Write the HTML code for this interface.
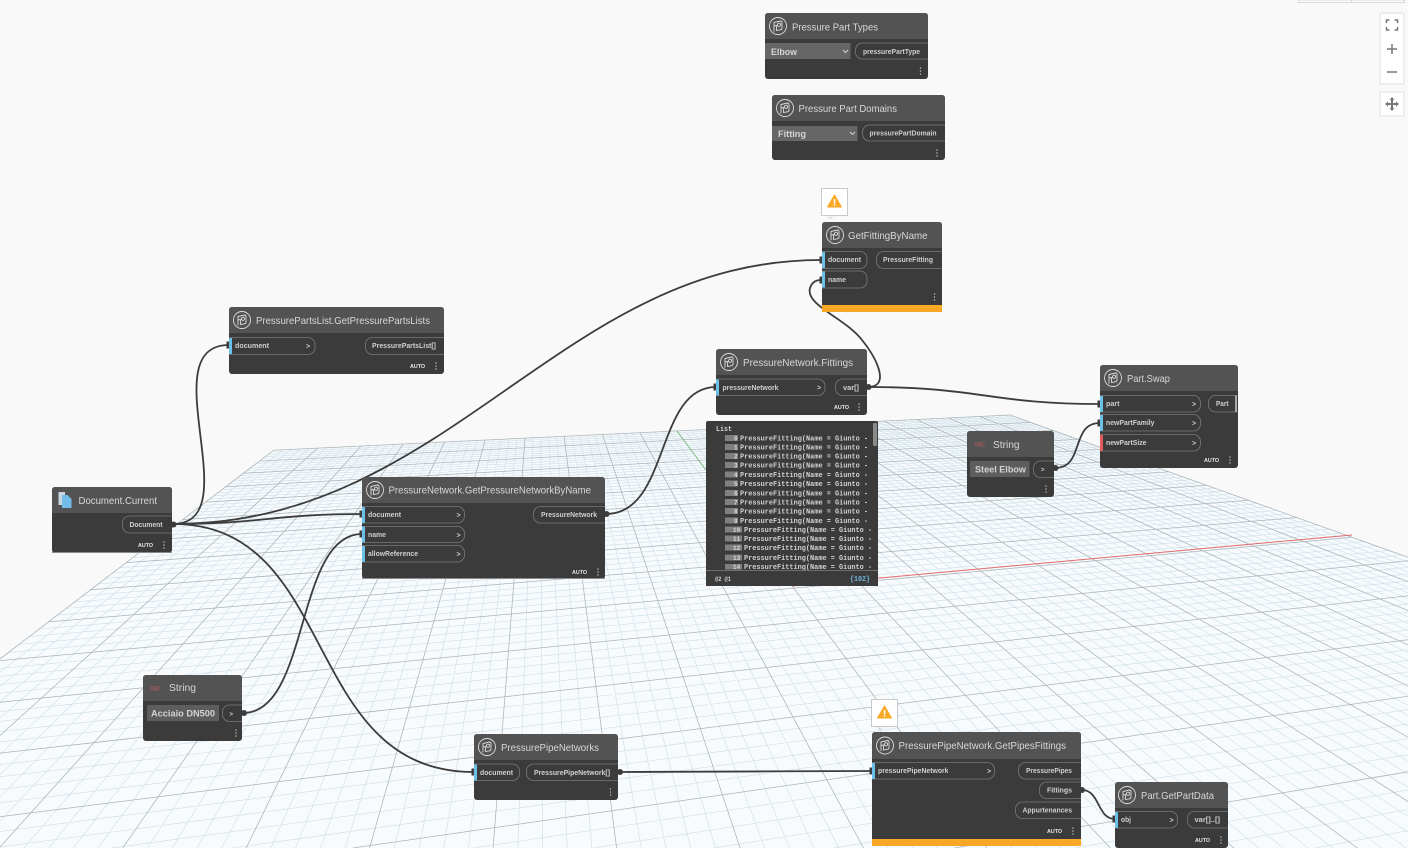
<!DOCTYPE html>
<html><head><meta charset="utf-8"><title>Dynamo graph</title>
<style>
html,body{margin:0;padding:0;background:#f9f9f9;width:1408px;height:848px;overflow:hidden}
#root{display:block;filter:blur(.3px);overflow:hidden}
text{font-family:"Liberation Sans",sans-serif}
.t{font-size:10.5px;fill:#d8d8d8}
.l{font-size:7px;font-weight:bold;fill:#cfcfcf}
.a{font-size:5.5px;font-weight:bold;fill:#e8e8e8}
.v{font-size:9.5px;font-weight:bold;fill:#d4d4d4}
.p{fill:none;stroke:#7a7a7a;stroke-width:.8}
.b{fill:#3b3b3b}
.h{fill:#535353}
.w{fill:none;stroke:#3c3c3c;stroke-width:1.8}
.k{fill:#3c3c3c}
.m{font-family:"Liberation Mono",monospace;font-size:7px;font-weight:bold;fill:#d2d2d2}
.i{fill:#808080}
.ix{font-family:"Liberation Mono",monospace;font-size:6px;font-weight:bold;fill:#d8d8d8}
.c{fill:none;stroke:#dcdcdc;stroke-width:.9}
</style></head><body>
<svg id="root" width="1408" height="848" viewBox="0 0 1408 848" xmlns="http://www.w3.org/2000/svg">
<defs>
<g id="d"><circle cx="0" cy="-3" r=".75" fill="#bdbdbd"/><circle cx="0" cy="0" r=".75" fill="#bdbdbd"/><circle cx="0" cy="3" r=".75" fill="#bdbdbd"/></g>
<g id="ic"><circle r="8.5" class="c"/><path class="c" d="M-4 -3.5 L2.5 -5 Q4 -5 4 -3.5 V2 Q4 3.5 2.5 3.8 L-1.5 4.5 V-0.5 L-4 0 Z M-4 -3.5 V5.5"/><circle cx="1" cy="-1.2" r="1.6" class="c"/></g>
<g id="wn"><rect x="0" y="0" width="26" height="27" fill="#fff" stroke="#c9c9c9"/><path d="M7 28 L9 30 L11 28" fill="none" stroke="#c9c9c9" stroke-width=".8"/><path d="M13 6.500 L20 18.500 H6 Z" fill="#f9a825" stroke="#f9a825" stroke-linejoin="round"/><rect x="12.300" y="10.500" width="1.500" height="4.500" fill="#fff"/><rect x="12.300" y="15.800" width="1.500" height="1.500" fill="#fff"/></g>
</defs>
<rect width="1408" height="848" fill="#f9f9f9"/>
<polygon points="274,450 1010,415 1408,557 1408,848 0,848 0,658" fill="#f8fbfd"/>
<g id="grid"></g>

<!-- top right stub + controls -->
<rect x="1299" y="0" width="105.500" height="2.500" fill="#fff" stroke="#d6d6d6"/><line x1="1351.500" y1="0" x2="1351.500" y2="2" stroke="#d6d6d6"/>
<rect x="1380" y="13" width="24" height="71" rx="1" fill="#fff" stroke="#dedede"/>
<rect x="1380" y="92" width="24" height="24" rx="1" fill="#fff" stroke="#e2e2e2"/>
<path d="M1386.500 23 V20 H1389.500 M1394.500 20 H1397.500 V23 M1397.500 27 V30 H1394.500 M1389.500 30 H1386.500 V27" fill="none" stroke="#777" stroke-width="1.500"/>
<path d="M1387 49 H1397 M1392 44 V54" stroke="#777" stroke-width="1.500"/>
<path d="M1387 72 H1397" stroke="#777" stroke-width="1.500"/>
<path d="M1392 98 V110 M1386 104 H1398" stroke="#777" stroke-width="2"/>
<path d="M1392 97 L1394.500 100 H1389.500 Z M1392 111 L1394.500 108 H1389.500 Z M1385 104 L1388 101.500 V106.500 Z M1399 104 L1396 101.500 V106.500 Z" fill="#777"/>

<!-- wires -->
<path class="w" d="M173 524 C250 524 150 345 229 345"/>
<path class="w" d="M173 524 C450 524 560 260 821 260"/>
<path class="w" d="M173 524 C260 524 275 514 362 514"/>
<path class="w" d="M173 524 C340 524 300 772 474 772"/>
<path class="w" d="M243 713 C310 713 295 534 362 534"/>
<path class="w" d="M606 514 C670 514 655 387 716 387"/>
<path class="w" d="M868 387 C980 387 990 404 1100 404"/>
<path class="w" d="M868 387 C890 387 878 360 862 340 C845 318 805 305 810 288 C812 282 816 280 821 280"/>
<path class="w" d="M1055 468 C1085 468 1070 423 1100 423"/>
<path class="w" d="M620 772 C700 772 790 771 872 771"/>
<path class="w" d="M1082 790 C1100 790 1097 819 1115 819"/>
<g class="k">
<circle cx="173.500" cy="524.500" r="3"/><circle cx="606.500" cy="514" r="3"/><circle cx="868.500" cy="387" r="3"/><circle cx="1055.500" cy="468" r="3"/><circle cx="244" cy="713" r="3"/><circle cx="620" cy="772" r="3"/><circle cx="1082" cy="790" r="3"/>
<rect x="226.500" y="341.500" width="3" height="7"/><rect x="359.500" y="510.500" width="3" height="7"/><rect x="359.500" y="530.500" width="3" height="7"/><rect x="713.500" y="383.500" width="3" height="7"/><rect x="819.500" y="256.500" width="3" height="7"/><rect x="819.500" y="276.500" width="3" height="7"/><rect x="1097.500" y="400.500" width="3" height="7"/><rect x="1097.500" y="419.500" width="3" height="7"/><rect x="471.500" y="768.500" width="3" height="7"/><rect x="869.500" y="767.500" width="3" height="7"/><rect x="1112.500" y="815.500" width="3" height="7"/>
</g>

<!-- Pressure Part Types -->
<svg x="765" y="13" width="163" height="66" viewBox="765 13 163 66">
<rect x="765" y="13" width="163" height="66" rx="3" class="b"/><rect x="765" y="13" width="163" height="26" rx="3" class="h"/><rect x="765" y="30" width="163" height="9" class="h"/>
<rect x="765" y="43" width="85.500" height="16" fill="#666"/>
<text class="v" x="771" y="55" textLength="26" lengthAdjust="spacingAndGlyphs">Elbow</text>
<path d="M843 50 L845.500 52.500 L848 50" fill="none" stroke="#d0d0d0"/>
<rect class="p" x="855.500" y="43" width="90" height="16" rx="7"/>
<text class="l" x="863" y="54" textLength="57" lengthAdjust="spacingAndGlyphs">pressurePartType</text>
<text class="t" x="792" y="30.500" textLength="86" lengthAdjust="spacingAndGlyphs">Pressure Part Types</text>
<use href="#ic" x="778" y="26"/><use href="#d" x="920.500" y="71"/>
</svg>

<!-- Pressure Part Domains -->
<svg x="772" y="95" width="173" height="65" viewBox="772 95 173 65">
<rect x="772" y="95" width="173" height="65" rx="3" class="b"/><rect x="772" y="95" width="173" height="26" rx="3" class="h"/><rect x="772" y="112" width="173" height="9" class="h"/>
<rect x="772" y="126" width="85.500" height="15" fill="#666"/>
<text class="v" x="778" y="137" textLength="28" lengthAdjust="spacingAndGlyphs">Fitting</text>
<path d="M850 132 L852.500 134.500 L855 132" fill="none" stroke="#d0d0d0"/>
<rect class="p" x="862.500" y="125" width="100" height="16" rx="7"/>
<text class="l" x="869.500" y="135.500" textLength="67" lengthAdjust="spacingAndGlyphs">pressurePartDomain</text>
<text class="t" x="798.500" y="112" textLength="98.500" lengthAdjust="spacingAndGlyphs">Pressure Part Domains</text>
<use href="#ic" x="785" y="108"/><use href="#d" x="937" y="153"/>
</svg>

<!-- warning boxes -->
<use href="#wn" x="821.500" y="188.500"/>
<use href="#wn" x="871.500" y="699.500"/>

<!-- GetFittingByName -->
<svg x="822" y="222" width="120" height="90" viewBox="822 222 120 90">
<rect x="822" y="222" width="120" height="90" rx="3" class="b"/><rect x="822" y="222" width="120" height="26" rx="3" class="h"/><rect x="822" y="239" width="120" height="9" class="h"/>
<rect x="822" y="305" width="120" height="7" fill="#f9a825"/>
<rect class="p" x="812" y="251.500" width="55" height="17" rx="7"/><rect class="p" x="812" y="271" width="55" height="17" rx="7"/>
<rect class="p" x="876.500" y="251.500" width="85" height="17" rx="7"/>
<rect x="822" y="252" width="3" height="16" fill="#6ac0e7"/><rect x="822" y="271.500" width="3" height="16" fill="#6ac0e7"/>
<text class="l" x="828" y="262" textLength="33" lengthAdjust="spacingAndGlyphs">document</text>
<text class="l" x="828" y="282" textLength="18" lengthAdjust="spacingAndGlyphs">name</text>
<text class="l" x="883" y="262" textLength="50" lengthAdjust="spacingAndGlyphs">PressureFitting</text>
<text class="t" x="848" y="239" textLength="79.500" lengthAdjust="spacingAndGlyphs">GetFittingByName</text>
<use href="#ic" x="835" y="235"/><use href="#d" x="934.500" y="297"/>
</svg>

<!-- PressurePartsList -->
<svg x="229" y="307" width="215" height="67" viewBox="229 307 215 67">
<rect x="229" y="307" width="215" height="67" rx="3" class="b"/><rect x="229" y="307" width="215" height="26" rx="3" class="h"/><rect x="229" y="324" width="215" height="9" class="h"/>
<rect class="p" x="219" y="337.500" width="96" height="17" rx="7"/><rect class="p" x="365.500" y="337.500" width="100" height="17" rx="7"/>
<rect x="229" y="338" width="3" height="16" fill="#6ac0e7"/>
<text class="l" x="235" y="348" textLength="34" lengthAdjust="spacingAndGlyphs">document</text>
<text class="l" x="306" y="348.500">&gt;</text>
<text class="l" x="372" y="348" textLength="64" lengthAdjust="spacingAndGlyphs">PressurePartsList[]</text>
<text class="t" x="256" y="324" textLength="174" lengthAdjust="spacingAndGlyphs">PressurePartsList.GetPressurePartsLists</text>
<use href="#ic" x="242" y="320"/>
<text class="a" x="410" y="368" textLength="15" lengthAdjust="spacingAndGlyphs">AUTO</text><use href="#d" x="436" y="366"/>
</svg>

<!-- PressureNetwork.Fittings -->
<svg x="716" y="349" width="151" height="66" viewBox="716 349 151 66">
<rect x="716" y="349" width="151" height="66" rx="3" class="b"/><rect x="716" y="349" width="151" height="26" rx="3" class="h"/><rect x="716" y="366" width="151" height="9" class="h"/>
<rect class="p" x="706" y="379" width="119" height="16.500" rx="7"/><rect class="p" x="835.500" y="379" width="50" height="16.500" rx="7"/>
<rect x="716" y="379.500" width="3" height="16" fill="#6ac0e7"/>
<text class="l" x="722.500" y="390" textLength="56" lengthAdjust="spacingAndGlyphs">pressureNetwork</text>
<text class="l" x="817" y="390">&gt;</text>
<text class="l" x="843" y="390" textLength="16" lengthAdjust="spacingAndGlyphs">var[]</text>
<text class="t" x="743" y="366" textLength="110" lengthAdjust="spacingAndGlyphs">PressureNetwork.Fittings</text>
<use href="#ic" x="729" y="362"/>
<text class="a" x="834" y="409" textLength="15" lengthAdjust="spacingAndGlyphs">AUTO</text><use href="#d" x="859" y="407"/>
</svg>

<!-- Watch -->
<rect x="706" y="421" width="172" height="165" rx="2" class="b"/>
<rect x="873" y="423" width="4" height="23" rx="1.500" fill="#8a8a8a"/>
<text class="m" x="716" y="431" textLength="16" lengthAdjust="spacingAndGlyphs">List</text>
<g>
<rect class="i" x="725" y="435" width="13" height="6"/><text class="ix" x="734" y="440.500">0</text><text class="m" x="740" y="440.500" textLength="128" lengthAdjust="spacingAndGlyphs">PressureFitting(Name = Giunto -</text>
<rect class="i" x="725" y="444" width="13" height="6"/><text class="ix" x="734" y="449.500">1</text><text class="m" x="740" y="449.500" textLength="128" lengthAdjust="spacingAndGlyphs">PressureFitting(Name = Giunto -</text>
<rect class="i" x="725" y="453" width="13" height="6"/><text class="ix" x="734" y="458.500">2</text><text class="m" x="740" y="458.500" textLength="128" lengthAdjust="spacingAndGlyphs">PressureFitting(Name = Giunto -</text>
<rect class="i" x="725" y="462" width="13" height="6"/><text class="ix" x="734" y="467.500">3</text><text class="m" x="740" y="467.500" textLength="128" lengthAdjust="spacingAndGlyphs">PressureFitting(Name = Giunto -</text>
<rect class="i" x="725" y="471.500" width="13" height="6"/><text class="ix" x="734" y="477">4</text><text class="m" x="740" y="477" textLength="128" lengthAdjust="spacingAndGlyphs">PressureFitting(Name = Giunto -</text>
<rect class="i" x="725" y="480.500" width="13" height="6"/><text class="ix" x="734" y="486">5</text><text class="m" x="740" y="486" textLength="128" lengthAdjust="spacingAndGlyphs">PressureFitting(Name = Giunto -</text>
<rect class="i" x="725" y="490" width="13" height="6"/><text class="ix" x="734" y="495.500">6</text><text class="m" x="740" y="495.500" textLength="128" lengthAdjust="spacingAndGlyphs">PressureFitting(Name = Giunto -</text>
<rect class="i" x="725" y="499" width="13" height="6"/><text class="ix" x="734" y="504.500">7</text><text class="m" x="740" y="504.500" textLength="128" lengthAdjust="spacingAndGlyphs">PressureFitting(Name = Giunto -</text>
<rect class="i" x="725" y="508" width="13" height="6"/><text class="ix" x="734" y="513.500">8</text><text class="m" x="740" y="513.500" textLength="128" lengthAdjust="spacingAndGlyphs">PressureFitting(Name = Giunto -</text>
<rect class="i" x="725" y="517.500" width="13" height="6"/><text class="ix" x="734" y="523">9</text><text class="m" x="740" y="523" textLength="128" lengthAdjust="spacingAndGlyphs">PressureFitting(Name = Giunto -</text>
<rect class="i" x="725" y="526.500" width="17" height="6"/><text class="ix" x="733" y="532">10</text><text class="m" x="744" y="532" textLength="128" lengthAdjust="spacingAndGlyphs">PressureFitting(Name = Giunto -</text>
<rect class="i" x="725" y="535.500" width="17" height="6"/><text class="ix" x="733" y="541">11</text><text class="m" x="744" y="541" textLength="128" lengthAdjust="spacingAndGlyphs">PressureFitting(Name = Giunto -</text>
<rect class="i" x="725" y="544.500" width="17" height="6"/><text class="ix" x="733" y="550">12</text><text class="m" x="744" y="550" textLength="128" lengthAdjust="spacingAndGlyphs">PressureFitting(Name = Giunto -</text>
<rect class="i" x="725" y="554.500" width="17" height="6"/><text class="ix" x="733" y="560">13</text><text class="m" x="744" y="560" textLength="128" lengthAdjust="spacingAndGlyphs">PressureFitting(Name = Giunto -</text>
<rect class="i" x="725" y="564" width="17" height="5.500" /><text class="ix" x="733" y="569">14</text><text class="m" x="744" y="569" textLength="128" lengthAdjust="spacingAndGlyphs">PressureFitting(Name = Giunto -</text>
</g>
<rect x="706" y="570" width="172" height="16" class="b"/><line x1="706" y1="570.500" x2="878" y2="570.500" stroke="#6d6d6d"/>
<text class="m" x="715" y="581" textLength="16" lengthAdjust="spacingAndGlyphs" style="font-size:6px">@2 @1</text>
<text class="m" x="850" y="581" textLength="20" lengthAdjust="spacingAndGlyphs" style="fill:#6fb5d8">{102}</text>

<!-- Document.Current -->
<svg x="52" y="487" width="120" height="66" viewBox="52 487 120 66">
<rect x="52" y="487" width="120" height="66" rx="3" class="b"/><rect x="52" y="487" width="120" height="26" rx="3" class="h"/><rect x="52" y="504" width="120" height="9" class="h"/>
<path d="M58.500 492 H65 V505 H58.500 Z" fill="#c9d6de"/><path d="M62 495 H67.500 L71.500 499 V508 H62 Z" fill="#72bde9"/>
<rect class="p" x="122.500" y="516" width="70" height="17" rx="7"/>
<text class="l" x="129.500" y="527" textLength="33" lengthAdjust="spacingAndGlyphs">Document</text>
<text class="t" x="78.500" y="504" textLength="78.500" lengthAdjust="spacingAndGlyphs">Document.Current</text>
<text class="a" x="138" y="547" textLength="15" lengthAdjust="spacingAndGlyphs">AUTO</text><use href="#d" x="164" y="545"/>
<rect x="52" y="552" width="120" height="1" fill="#8a8a8a"/>
</svg>

<!-- GetPressureNetworkByName -->
<svg x="362" y="477" width="243" height="102" viewBox="362 477 243 102">
<rect x="362" y="477" width="243" height="102" rx="3" class="b"/><rect x="362" y="477" width="243" height="26" rx="3" class="h"/><rect x="362" y="494" width="243" height="9" class="h"/>
<rect class="p" x="352" y="506.500" width="112.500" height="16.500" rx="7"/><rect class="p" x="352" y="526.500" width="112.500" height="16" rx="7"/><rect class="p" x="352" y="545.500" width="112.500" height="16.500" rx="7"/>
<rect class="p" x="533.500" y="506.500" width="90" height="16.500" rx="7"/>
<rect x="362" y="507" width="3" height="16" fill="#6ac0e7"/><rect x="362" y="526.500" width="3" height="16" fill="#6ac0e7"/><rect x="362" y="546" width="3" height="16" fill="#6ac0e7"/>
<text class="l" x="368" y="517" textLength="33" lengthAdjust="spacingAndGlyphs">document</text><text class="l" x="456.500" y="517.500">&gt;</text>
<text class="l" x="368" y="537" textLength="18" lengthAdjust="spacingAndGlyphs">name</text><text class="l" x="456.500" y="537.500">&gt;</text>
<text class="l" x="368" y="556" textLength="50" lengthAdjust="spacingAndGlyphs">allowReference</text><text class="l" x="456.500" y="556.500">&gt;</text>
<text class="l" x="541" y="517" textLength="56" lengthAdjust="spacingAndGlyphs">PressureNetwork</text>
<text class="t" x="388.500" y="493.500" textLength="202.500" lengthAdjust="spacingAndGlyphs">PressureNetwork.GetPressureNetworkByName</text>
<use href="#ic" x="375" y="490"/>
<text class="a" x="572" y="574" textLength="15" lengthAdjust="spacingAndGlyphs">AUTO</text><use href="#d" x="598" y="572"/>
<rect x="362" y="578" width="243" height="1" fill="#8a8a8a"/>
</svg>

<!-- String Acciaio -->
<svg x="143" y="675" width="99" height="66" viewBox="143 675 99 66">
<rect x="143" y="675" width="99" height="66" rx="3" class="b"/><rect x="143" y="675" width="99" height="26" rx="3" class="h"/><rect x="143" y="692" width="99" height="9" class="h"/>
<rect x="147" y="705" width="72" height="16" fill="#5d5d5d"/>
<text class="v" x="151" y="716.500" textLength="64" lengthAdjust="spacingAndGlyphs">Acciaio DN500</text>
<rect class="p" x="222.500" y="705" width="40" height="16.500" rx="7"/>
<text class="l" x="229.500" y="716" style="font-size:6px">&gt;</text>
<text x="150" y="690.500" textLength="11" lengthAdjust="spacingAndGlyphs" style="font-size:6px;fill:#a35a5a;font-weight:bold">ABC</text>
<text class="t" x="169" y="691" textLength="27" lengthAdjust="spacingAndGlyphs">String</text>
<use href="#d" x="236" y="733"/>
</svg>

<!-- String Steel Elbow -->
<svg x="967" y="431" width="87" height="66" viewBox="967 431 87 66">
<rect x="967" y="431" width="87" height="66" rx="3" class="b"/><rect x="967" y="431" width="87" height="26" rx="3" class="h"/><rect x="967" y="448" width="87" height="9" class="h"/>
<rect x="970" y="461" width="59.500" height="16" fill="#5d5d5d"/>
<text class="v" x="975" y="472.500" textLength="51" lengthAdjust="spacingAndGlyphs">Steel Elbow</text>
<rect class="p" x="1033.500" y="461" width="40" height="16.500" rx="7"/>
<text class="l" x="1041" y="471.500" style="font-size:6px">&gt;</text>
<text x="974" y="446.500" textLength="11" lengthAdjust="spacingAndGlyphs" style="font-size:6px;fill:#a35a5a;font-weight:bold">ABC</text>
<text class="t" x="993" y="448" textLength="26.500" lengthAdjust="spacingAndGlyphs">String</text>
<use href="#d" x="1046" y="489"/>
</svg>

<!-- Part.Swap -->
<svg x="1100" y="365" width="138" height="103" viewBox="1100 365 138 103">
<rect x="1100" y="365" width="138" height="103" rx="3" class="b"/><rect x="1100" y="365" width="138" height="26" rx="3" class="h"/><rect x="1100" y="382" width="138" height="9" class="h"/>
<rect class="p" x="1090" y="395.500" width="110.500" height="16.500" rx="7"/><rect class="p" x="1090" y="414.500" width="110.500" height="16.500" rx="7"/><rect class="p" x="1090" y="434.500" width="110.500" height="16.500" rx="7"/>
<rect class="p" x="1208.500" y="395.500" width="50" height="16.500" rx="7"/>
<rect x="1235" y="395.500" width="2" height="16.500" fill="#aaa"/>
<rect x="1100" y="396" width="3" height="16" fill="#6ac0e7"/><rect x="1100" y="415" width="3" height="16" fill="#6ac0e7"/><rect x="1100" y="435" width="3" height="16" fill="#e25a5a"/>
<text class="l" x="1106" y="406" textLength="13.500" lengthAdjust="spacingAndGlyphs">part</text><text class="l" x="1192" y="406.500">&gt;</text>
<text class="l" x="1106" y="425" textLength="48.500" lengthAdjust="spacingAndGlyphs">newPartFamily</text><text class="l" x="1192" y="425.500">&gt;</text>
<text class="l" x="1106" y="445" textLength="40.500" lengthAdjust="spacingAndGlyphs">newPartSize</text><text class="l" x="1192" y="445.500">&gt;</text>
<text class="l" x="1216" y="406" textLength="12.500" lengthAdjust="spacingAndGlyphs">Part</text>
<text class="t" x="1127" y="382" textLength="43" lengthAdjust="spacingAndGlyphs">Part.Swap</text>
<use href="#ic" x="1113" y="378"/>
<text class="a" x="1204" y="462" textLength="15" lengthAdjust="spacingAndGlyphs">AUTO</text><use href="#d" x="1230" y="460"/>
</svg>

<!-- PressurePipeNetworks -->
<svg x="474" y="734" width="144" height="66" viewBox="474 734 144 66">
<rect x="474" y="734" width="144" height="66" rx="3" class="b"/><rect x="474" y="734" width="144" height="26" rx="3" class="h"/><rect x="474" y="751" width="144" height="9" class="h"/>
<rect class="p" x="464" y="764" width="55.500" height="16.500" rx="7"/><rect class="p" x="526.500" y="764" width="110" height="16.500" rx="7"/>
<rect x="474" y="764.500" width="3" height="16" fill="#6ac0e7"/>
<text class="l" x="480" y="775" textLength="33" lengthAdjust="spacingAndGlyphs">document</text>
<text class="l" x="534" y="775" textLength="76" lengthAdjust="spacingAndGlyphs">PressurePipeNetwork[]</text>
<text class="t" x="501" y="751" textLength="98" lengthAdjust="spacingAndGlyphs">PressurePipeNetworks</text>
<use href="#ic" x="487" y="747"/><use href="#d" x="610.500" y="792"/>
</svg>

<!-- GetPipesFittings -->
<svg x="872" y="732" width="209" height="114" viewBox="872 732 209 114">
<rect x="872" y="732" width="209" height="114" rx="3" class="b"/><rect x="872" y="732" width="209" height="27" rx="3" class="h"/><rect x="872" y="749" width="209" height="10" class="h"/>
<rect x="872" y="839" width="209" height="7" fill="#f9a825"/>
<rect class="p" x="862" y="762.500" width="132.500" height="16.500" rx="7"/>
<rect class="p" x="1018.500" y="762.500" width="85" height="16.500" rx="7"/><rect class="p" x="1039.500" y="782" width="65" height="16.500" rx="7"/><rect class="p" x="1015.500" y="802" width="85" height="16.500" rx="7"/>
<rect x="872" y="763" width="3" height="16" fill="#6ac0e7"/>
<text class="l" x="878" y="773" textLength="70.500" lengthAdjust="spacingAndGlyphs">pressurePipeNetwork</text><text class="l" x="987" y="773.500">&gt;</text>
<text class="l" x="1026" y="773" textLength="46" lengthAdjust="spacingAndGlyphs">PressurePipes</text>
<text class="l" x="1047" y="792.500" textLength="25" lengthAdjust="spacingAndGlyphs">Fittings</text>
<text class="l" x="1022.500" y="812.500" textLength="49.500" lengthAdjust="spacingAndGlyphs">Appurtenances</text>
<text class="t" x="898.500" y="749" textLength="167.500" lengthAdjust="spacingAndGlyphs">PressurePipeNetwork.GetPipesFittings</text>
<use href="#ic" x="885" y="745.500"/>
<text class="a" x="1047" y="833" textLength="15" lengthAdjust="spacingAndGlyphs">AUTO</text><use href="#d" x="1073" y="831"/>
</svg>

<!-- Part.GetPartData -->
<svg x="1115" y="782" width="113" height="66" viewBox="1115 782 113 66">
<rect x="1115" y="782" width="113" height="66" rx="3" class="b"/><rect x="1115" y="782" width="113" height="26" rx="3" class="h"/><rect x="1115" y="799" width="113" height="9" class="h"/>
<rect class="p" x="1105" y="811.500" width="72.500" height="16.500" rx="7"/><rect class="p" x="1187.500" y="811.500" width="60" height="16.500" rx="7"/>
<rect x="1115" y="812" width="3" height="16" fill="#6ac0e7"/>
<text class="l" x="1121" y="822" textLength="10" lengthAdjust="spacingAndGlyphs">obj</text><text class="l" x="1169.500" y="822.500">&gt;</text>
<text class="l" x="1194.500" y="822" textLength="25.500" lengthAdjust="spacingAndGlyphs">var[]..[]</text>
<text class="t" x="1141" y="799" textLength="73" lengthAdjust="spacingAndGlyphs">Part.GetPartData</text>
<use href="#ic" x="1127" y="795"/>
<text class="a" x="1195" y="842" textLength="15" lengthAdjust="spacingAndGlyphs">AUTO</text><use href="#d" x="1221" y="840"/>
</svg>
</svg>
<script>
(function(){
var g=document.getElementById('grid'),NS='http://www.w3.org/2000/svg',N=100,minor='',major='';
function seg(a,b,c,d){
  /* clip the segment to the 1408x848 frame */
  var dx=c-a,dy=d-b,t0=0,t1=1,P=[-dx,dx,-dy,dy],Q=[a,1408-a,b,848-b];
  for(var k=0;k<4;k++){
    if(P[k]===0){if(Q[k]<0)return '';continue;}
    var r=Q[k]/P[k];
    if(P[k]<0){if(r>t1)return '';if(r>t0)t0=r;}
    else{if(r<t0)return '';if(r<t1)t1=r;}
  }
  return 'M'+(a+t0*dx).toFixed(1)+' '+(b+t0*dy).toFixed(1)+'L'+(a+t1*dx).toFixed(1)+' '+(b+t1*dy).toFixed(1);
}
for(var i=0;i<=N;i++){
  var u=i/N,px=4531-20366/(u+4.784),py=450-0.0476*(px-274),t=(900-247)/(py-247),ex=540+(px-540)*t;
  var s1=seg(px,py,ex,900);
  var v=i/N,qx=540+558/(1.187-v),qy=415+0.357*(qx-1010),s=(qy-247)/(4531-qx),lx=(540-1.3103*s*4531)/(1-1.3103*s),ly=247+s*(4531-lx);
  var s2=seg(lx,ly,qx,qy);
  if(i%5==0){major+=s1+s2;}else{minor+=s1+s2;}
}
function add(d,c,w){var p=document.createElementNS(NS,'path');p.setAttribute('d',d);p.setAttribute('stroke',c);p.setAttribute('stroke-width',w);p.setAttribute('fill','none');g.appendChild(p);}
add(minor,'#d0e0e8','0.65');
add(major,'#a9b4b9','0.75');
add('M677 431L792 586','#7dbb7d','0.9');
add('M792 586L1352 535','#e26a6a','1');
})();
</script>
</body></html>
